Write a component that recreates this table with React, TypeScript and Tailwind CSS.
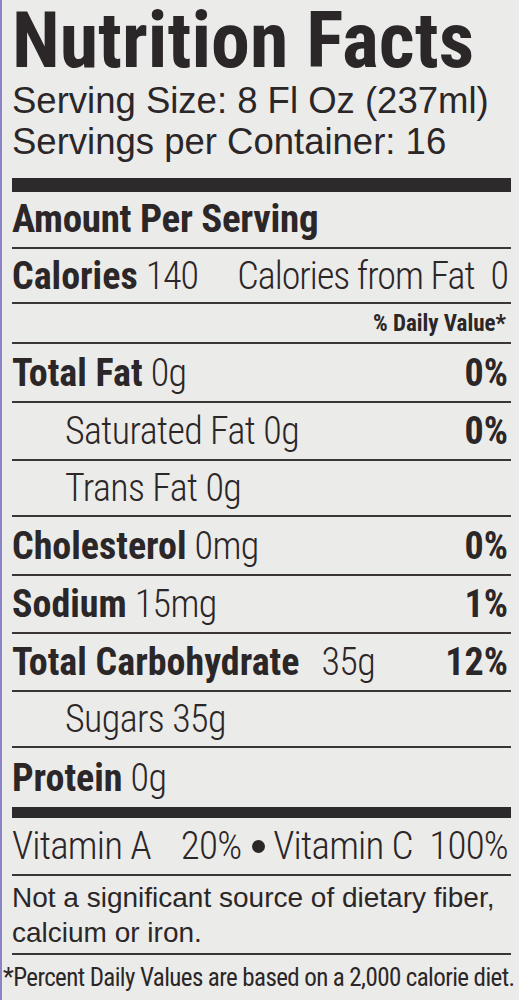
import React from "react";

const cond = "font-['Roboto_Condensed','Roboto',sans-serif]";
const wide = "font-['Liberation_Sans',Arial,sans-serif]";
const rule = "border-b-2 border-[#3a3536]";

type Row = {
  label: string;
  amount: string;
  dv?: string;
  bold?: boolean;
  indent?: boolean;
  h: string;
  last?: boolean;
};

const rows: Row[] = [
  { label: "Total Fat", amount: "0g", dv: "0%", bold: true, h: "h-[59px]" },
  { label: "Saturated Fat", amount: "0g", dv: "0%", indent: true, h: "h-[58px]" },
  { label: "Trans Fat", amount: "0g", indent: true, h: "h-[56px]" },
  { label: "Cholesterol", amount: "0mg", dv: "0%", bold: true, h: "h-[59px]" },
  { label: "Sodium", amount: "15mg", dv: "1%", bold: true, h: "h-[58px]" },
  { label: "Total Carbohydrate", amount: "35g", dv: "12%", bold: true, h: "h-[58px]" },
  { label: "Sugars", amount: "35g", indent: true, h: "h-[56px]" },
  { label: "Protein", amount: "0g", bold: true, h: "h-[59px]", last: true },
];

const NutrientRow: React.FC<{ row: Row }> = ({ row }) => (
  <div
    className={`flex items-center justify-between text-[38px] leading-[38px] ${row.h} ${
      row.last ? "" : rule
    } ${row.indent ? "pl-[53px]" : ""}`}
  >
    <div>
      {row.bold && <span className="font-bold">{row.label}</span>}
      {!row.bold && <span className="font-light tracking-[-0.6px]">{row.label}</span>}
      <span
        className={`font-light tracking-[-0.6px] ${
          row.label === "Total Carbohydrate" ? "ml-[22px]" : "ml-[8px]"
        }`}
      >
        {row.amount}
      </span>
    </div>
    {row.dv && <span className="font-bold pr-[3px]">{row.dv}</span>}
  </div>
);

export default function App() {
  return (
    <div className="w-[519px] h-[1000px] overflow-hidden bg-[#ebebe9] border-l-2 border-[#8a84c6] text-[#2b2627]">
      <div className={`pl-[10px] pr-[8px] pt-[2px] ${cond}`}>
        {/* header */}
        <h1 className="text-[78px] leading-[78px] font-bold">Nutrition Facts</h1>
        <div className={`${wide} text-[36.5px] leading-[41px] whitespace-nowrap`}>
          <div>Serving Size: 8 Fl Oz (237ml)</div>
          <div>Servings per Container: 16</div>
        </div>
        <div className="mt-[16px] h-[14px] bg-[#2d2a2c]" />

        {/* amount per serving */}
        <div className={`h-[57px] flex items-center ${rule} text-[39px] leading-[39px] font-bold tracking-[-0.3px]`}>
          Amount Per Serving
        </div>
        <div className={`h-[55px] flex items-center justify-between ${rule} text-[38px] leading-[38px] tracking-[-1px] font-light`}>
          <div>
            <span className="font-bold tracking-normal">Calories</span>
            <span className="ml-[8px]">140</span>
          </div>
          <div className="pr-[3px]">
            Calories from Fat<span className="ml-[16px]">0</span>
          </div>
        </div>
        <div className={`h-[40px] flex items-center justify-end ${rule} text-[23px] leading-[23px] font-bold pr-[5px]`}>
          % Daily Value*
        </div>

        {rows.map((r) => (
          <NutrientRow key={r.label} row={r} />
        ))}

        <div className="h-[11px] bg-[#2d2a2c]" />

        {/* vitamins */}
        <div className={`h-[58px] flex items-center ${rule} text-[39px] leading-[39px] tracking-[-0.8px] font-light`}>
          <span>Vitamin A</span>
          <span className="ml-[30px]">20%</span>
          <span className="ml-[11px] mr-[8px] inline-block w-[13px] h-[13px] rounded-full bg-[#2b2627]" />
          <span>Vitamin C</span>
          <span className="ml-auto pr-[3px]">100%</span>
        </div>

        <div className={`${wide} h-[79px] pt-[4px] ${rule} text-[28px] leading-[35px] whitespace-nowrap`}>
          Not a significant source of dietary fiber,
          <br />
          calcium or iron.
        </div>

        <div className="-ml-[9px] pt-[10px] text-[25px] leading-[26px] tracking-[-0.6px] whitespace-nowrap">
          *Percent Daily Values are based on a 2,000 calorie diet.
        </div>
      </div>
    </div>
  );
}
